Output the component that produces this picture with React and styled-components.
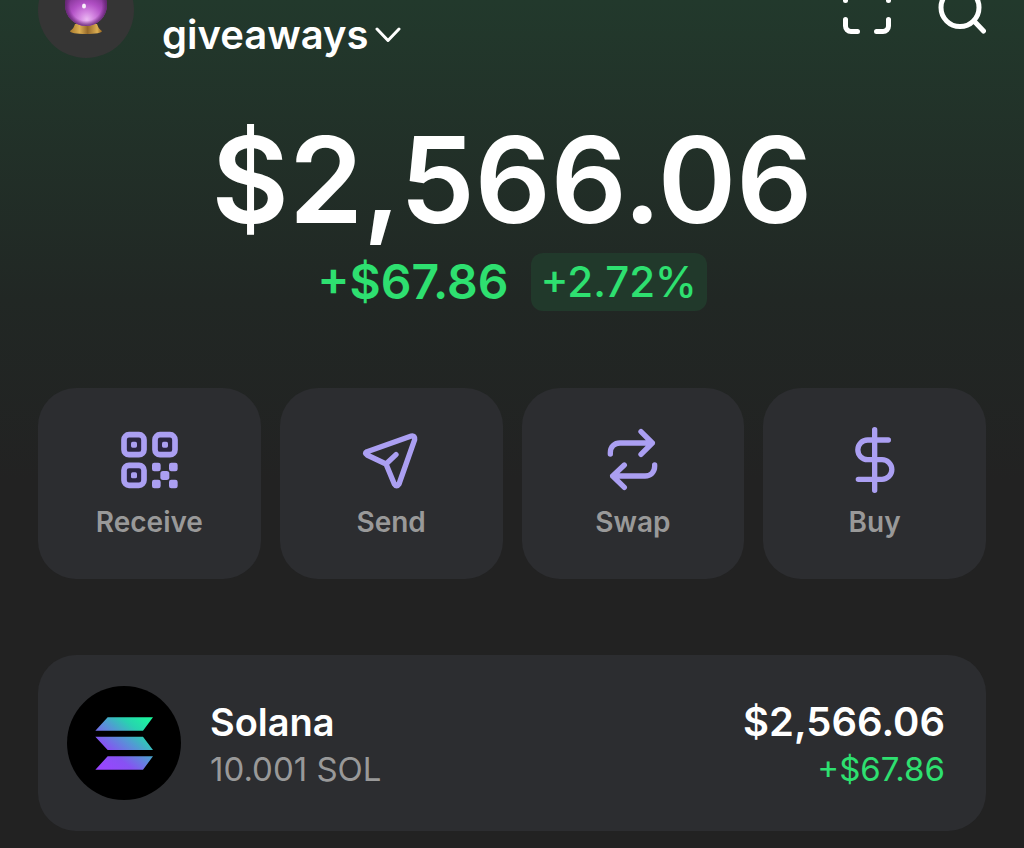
import React from "react";
import styled, {createGlobalStyle} from "styled-components";

const actions = [
    {label: 'Receive', Icon: ReceiveIcon},
    {label: 'Send', Icon: SendIcon},
    {label: 'Swap', Icon: SwapIcon},
    {label: 'Buy', Icon: BuyIcon},
]

function App() {
    return (
        <>
            <GlobalStyle />
            <WalletStyled>
                <Header>
                    <Avatar>
                        <CrystalBall />
                    </Avatar>
                    <AccountButton type="button">
                        giveaways
                        <ChevronIcon />
                    </AccountButton>
                    <Tools>
                        <ToolButton type="button" aria-label="Scan">
                            <ScanIcon />
                        </ToolButton>
                        <ToolButton type="button" aria-label="Search">
                            <SearchIcon />
                        </ToolButton>
                    </Tools>
                </Header>
                <main>
                    <Balance>$2,566.06</Balance>
                    <Change>
                        <ChangeAmount>+$67.86</ChangeAmount>
                        <ChangeBadge>+2.72%</ChangeBadge>
                    </Change>
                    <Actions>
                        {actions.map(({label, Icon}) => (
                            <ActionButton type="button" key={label}>
                                <Icon />
                                {label}
                            </ActionButton>
                        ))}
                    </Actions>
                    <TokenCard type="button">
                        <SolanaLogo />
                        <TokenInfo>
                            <TokenTitle>Solana</TokenTitle>
                            <TokenDetail>10.001 SOL</TokenDetail>
                        </TokenInfo>
                        <TokenInfo $end>
                            <TokenTitle $amount>$2,566.06</TokenTitle>
                            <TokenDetail $up>+$67.86</TokenDetail>
                        </TokenInfo>
                    </TokenCard>
                </main>
            </WalletStyled>
        </>
    )
}

function CrystalBall() {
    return (
        <svg width="48" height="56" viewBox="0 0 48 56" aria-hidden="true">
            <defs>
                <radialGradient id="ball" cx="0.52" cy="0.84" r="0.6">
                    <stop offset="0" stopColor="#eab8f2" />
                    <stop offset="0.3" stopColor="#d283e0" />
                    <stop offset="0.65" stopColor="#b04fc4" />
                    <stop offset="1" stopColor="#8a389c" />
                </radialGradient>
                <radialGradient id="rim" cx="0.5" cy="0.5" r="0.5">
                    <stop offset="0.75" stopColor="#5a2069" stopOpacity="0" />
                    <stop offset="1" stopColor="#5a2069" stopOpacity="0.8" />
                </radialGradient>
                <linearGradient id="base" x1="0" x2="1" y1="0" y2="0">
                    <stop offset="0" stopColor="#a87a2c" />
                    <stop offset="0.3" stopColor="#dcae52" />
                    <stop offset="0.55" stopColor="#96692a" />
                    <stop offset="0.85" stopColor="#dcae52" />
                    <stop offset="1" stopColor="#93621d" />
                </linearGradient>
            </defs>
            <path d="M13 45h22c1 3 2 5 5 7c0 2-6 3-16 3s-16-1-16-3c3-2 4-4 5-7z" fill="url(#base)" />
            <circle cx="24" cy="26" r="21" fill="url(#ball)" />
            <circle cx="24" cy="26" r="21" fill="url(#rim)" />
            <ellipse cx="22" cy="27" rx="2" ry="2.500" fill="#fff" opacity="0.9" />
        </svg>
    )
}

function ChevronIcon() {
    return (
        <svg width="26" height="16" viewBox="0 0 26 16" fill="none" stroke="currentColor" strokeWidth="3" strokeLinecap="round" strokeLinejoin="round" aria-hidden="true">
            <path d="M2 2l11 11.500L24 2" />
        </svg>
    )
}

function ScanIcon() {
    return (
        <svg width="48" height="48" viewBox="0 0 48 48" fill="none" stroke="currentColor" strokeWidth="5" strokeLinecap="round" strokeLinejoin="round" aria-hidden="true">
            <path d="M2.500 14.500V8a5.500 5.500 0 0 1 5.500-5.500h6.500M33.500 2.500H40A5.500 5.500 0 0 1 45.500 8v6.500M45.500 33.500V40a5.500 5.500 0 0 1-5.500 5.500h-6.500M14.500 45.500H8A5.500 5.500 0 0 1 2.500 40v-6.500" />
        </svg>
    )
}

function SearchIcon() {
    return (
        <svg width="48" height="48" viewBox="0 0 48 48" fill="none" stroke="currentColor" strokeWidth="5" strokeLinecap="round" aria-hidden="true">
            <circle cx="22" cy="21.500" r="19" />
            <path d="M36 35l9.500 10" />
        </svg>
    )
}

function ReceiveIcon() {
    return (
        <svg width="66" height="66" viewBox="-3 -2 198 198" aria-hidden="true">
            <g fill="#2a2540" stroke="#ab9ff2" strokeWidth="17">
                <rect x="21" y="21" width="60" height="60" rx="15" />
                <rect x="114" y="21" width="60" height="60" rx="15" />
                <rect x="21" y="113" width="60" height="60" rx="15" />
            </g>
            <g fill="#ab9ff2">
                <rect x="42" y="42" width="18" height="18" rx="5" />
                <rect x="135" y="42" width="18" height="18" rx="5" />
                <rect x="42" y="134" width="18" height="18" rx="5" />
                <rect x="105" y="105" width="26" height="26" rx="7" />
                <rect x="156" y="105" width="26" height="26" rx="7" />
                <rect x="130" y="130" width="27" height="27" rx="8" />
                <rect x="105" y="156" width="26" height="26" rx="7" />
                <rect x="156" y="156" width="26" height="26" rx="7" />
            </g>
        </svg>
    )
}

function SendIcon() {
    return (
        <svg width="66" height="66" viewBox="0 0 198 198" fill="none" stroke="#ab9ff2" strokeWidth="16" strokeLinecap="round" strokeLinejoin="round" aria-hidden="true">
            <path d="M160 27L27 74q-9 5 0 10L84 111L109 171q7 11 14 0L170 38q1-13-10-11zM84 111L114 83" />
        </svg>
    )
}

function SwapIcon() {
    return (
        <svg width="66" height="66" viewBox="0 0 198 198" fill="none" stroke="#ab9ff2" strokeWidth="16" strokeLinecap="round" strokeLinejoin="round" aria-hidden="true">
            <path d="M31 81V77C31 60 43 48 60 48H157M123 14L157 48L123 82" />
            <path d="M164 114V118C164 135 152 147 135 147H38M73 114L38 147L73 181" />
        </svg>
    )
}

function BuyIcon() {
    return (
        <svg width="66" height="66" viewBox="0 0 198 198" fill="none" stroke="#ab9ff2" strokeWidth="16" strokeLinecap="round" strokeLinejoin="round" aria-hidden="true">
            <path d="M98 8V190M139 39H77a29.500 29.500 0 0 0 0 59H120a29.500 29.500 0 0 1 0 59H49" />
        </svg>
    )
}

function SolanaLogo() {
    return (
        <TokenLogo viewBox="0 0 342 342" role="img" aria-label="Solana">
            <defs>
                <linearGradient id="solana" gradientUnits="userSpaceOnUse" x1="100" y1="258" x2="242" y2="84">
                    <stop offset="0.050" stopColor="#9945ff" />
                    <stop offset="0.300" stopColor="#8752f3" />
                    <stop offset="0.550" stopColor="#5497d5" />
                    <stop offset="0.750" stopColor="#28d3b0" />
                    <stop offset="1" stopColor="#19fb9b" />
                </linearGradient>
            </defs>
            <circle cx="171" cy="171" r="171" fill="#000" />
            <path d="M85 134L122 94H258L228 134zM85 152H228L258 192H122zM85 251L122 211H258L228 251z" fill="url(#solana)" />
        </TokenLogo>
    )
}

const GlobalStyle = createGlobalStyle`
    * {
        box-sizing: border-box;
        margin: 0;
        padding: 0;
    }

    body {
        background: #222222;
        font-family: Inter, "Liberation Sans", sans-serif;
        color: #ffffff;
    }

    button {
        border: none;
        background: none;
        color: inherit;
        font: inherit;
        cursor: pointer;
    }

    svg {
        display: block;
        flex-shrink: 0;
    }
`;

const WalletStyled = styled.div`
    min-height: 100vh;
    padding: 0 38px 17px;
    background: linear-gradient(#22392c 0, #212724 300px, #222222 480px);
`;

const Header = styled.header`
    display: flex;
    align-items: flex-end;
    height: 58px;
`;

const Avatar = styled.div`
    display: flex;
    align-items: flex-end;
    justify-content: center;
    width: 96px;
    height: 96px;
    padding-bottom: 23px;
    border-radius: 50%;
    background: #353535;
`;

const AccountButton = styled.button`
    display: flex;
    align-items: center;
    gap: 6px;
    margin: 0 auto 0 28px;
    font-size: 40px;
    font-weight: 600;
    line-height: 46px;
`;

const Tools = styled.div`
    display: flex;
    gap: 47px;
    padding-bottom: 24px;
`;

const ToolButton = styled.button`
    width: 48px;
    height: 48px;
`;

const Balance = styled.h1`
    margin-top: 49px;
    font-size: 119px;
    font-weight: 600;
    line-height: 146px;
    text-align: center;
`;

const Change = styled.div`
    display: flex;
    align-items: center;
    justify-content: center;
    gap: 22px;
    font-weight: 600;
    color: #2ee070;
`;

const ChangeAmount = styled.span`
    font-size: 48px;
    line-height: 58px;
`;

const ChangeBadge = styled.span`
    padding: 0 10px;
    border-radius: 12px;
    background: #21392b;
    font-size: 42px;
    font-weight: 500;
    line-height: 58px;
`;

const Actions = styled.div`
    display: grid;
    grid-template-columns: repeat(4, 1fr);
    gap: 19px;
    margin-top: 77px;
`;

const ActionButton = styled.button`
    display: flex;
    flex-direction: column;
    align-items: center;
    gap: 12px;
    height: 191px;
    padding-top: 39px;
    border-radius: 38px;
    background: #2c2d30;
    font-size: 28px;
    font-weight: 600;
    line-height: 34px;
    color: #999999;
`;

const TokenCard = styled.button`
    display: flex;
    align-items: center;
    width: 100%;
    height: 176px;
    margin-top: 76px;
    padding: 0 41px 0 29px;
    border-radius: 38px;
    background: #2c2d30;
`;

const TokenLogo = styled.svg`
    width: 114px;
    height: 114px;
    margin-right: 29px;
`;

const TokenInfo = styled.span`
    display: flex;
    flex: 1;
    flex-direction: column;
    padding-top: 4px;
    text-align: ${props => props.$end ? 'right' : 'left'};
`;

const TokenTitle = styled.span`
    font-size: ${props => props.$amount ? '40px' : '38px'};
    font-weight: 600;
    line-height: 48px;
`;

const TokenDetail = styled.span`
    font-size: 33px;
    line-height: 46px;
    color: ${props => props.$up ? '#2ee070' : '#999999'};
`;

export default App;
